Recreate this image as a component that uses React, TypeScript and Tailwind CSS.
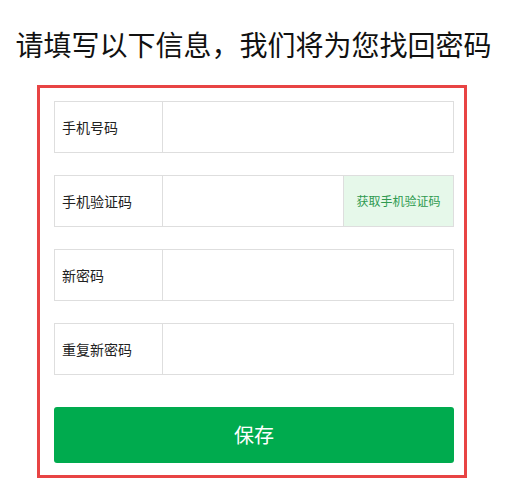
import React from "react";

const rows = [
  { label: "手机号码", code: false },
  { label: "手机验证码", code: true },
  { label: "新密码", code: false },
  { label: "重复新密码", code: false },
];

export default function App() {
  return (
    <div
      className="w-[507px] h-[497px] bg-white flex flex-col overflow-hidden"
      style={{ fontFamily: '"Noto Sans CJK SC", "Noto Sans", sans-serif' }}
    >
      <h1 className="mt-[30px] h-[28px] text-[28px] leading-[28px] text-center text-[#111] font-normal whitespace-nowrap">
        请填写以下信息，我们将为您找回密码
      </h1>
      <div className="mt-[27px] ml-[37px] w-[430px] border-[3px] border-[#e84444] pt-[13px] pb-[12px] pl-[14px] flex flex-col">
        <div className="flex flex-col gap-[22px]">
          {rows.map((r) => (
            <div key={r.label} className="w-[400px] h-[52px] border border-[#dedede] flex">
              <div className="w-[108px] border-r border-[#dedede] flex items-center pl-[7px] text-[14px] text-[#222]">
                {r.label}
              </div>
              <div className="flex-1" />
              {r.code && (
                <div className="w-[110px] border-l border-[#dedede] bg-[#e6f8ea] flex items-center justify-center text-[12px] text-[#2e9a50]">
                  获取手机验证码
                </div>
              )}
            </div>
          ))}
        </div>
        <button className="mt-[32px] w-[400px] h-[56px] rounded-[3px] bg-[#00ab4e] text-white text-[20px]">
          保存
        </button>
      </div>
    </div>
  );
}
